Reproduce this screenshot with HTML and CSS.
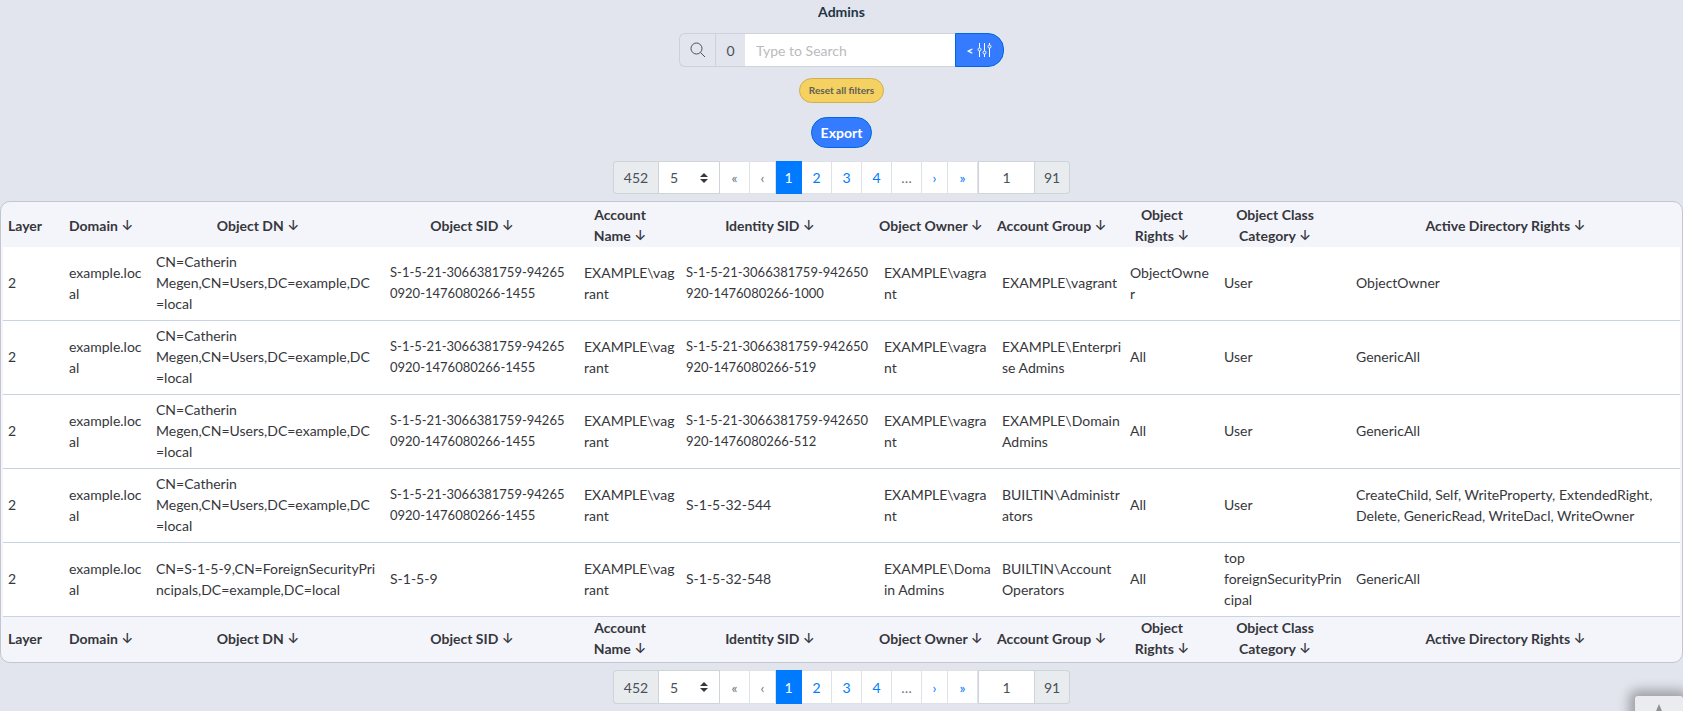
FILE: index.html
```html
<!DOCTYPE html>
<html lang="en">
<head>
<meta charset="utf-8">
<title>Admins</title>
<link rel="stylesheet" href="styles.css">
</head>
<body>
<main class="page">
<h1 class="title">Admins</h1>
<form class="search">
<label class="addon search-icon" for="q" aria-label="Search"><svg width="16" height="16" viewBox="0 0 16 16" fill="none" stroke="currentColor"><circle cx="6.5" cy="6.5" r="5.5"/><path d="M10.5 10.5 15 15"/></svg></label>
<span class="addon search-count">0</span>
<input class="search-input" id="q" type="text" placeholder="Type to Search">
<button class="search-options" type="button" aria-label="Filter options">&lt; <svg width="15" height="16" viewBox="0 0 15 16" fill="none" stroke="currentColor"><path d="M2.500 1v5M2.500 9v6M7.500 1v8M7.500 12v3M12.500 1v2M12.500 6v9"/><circle cx="2.500" cy="7.500" r="1.500"/><circle cx="7.500" cy="10.500" r="1.500"/><circle cx="12.500" cy="4.500" r="1.500"/></svg></button>
</form>
<button class="reset" type="button">Reset all filters</button>
<button class="export" type="button">Export</button>
<nav class="pager" aria-label="Pages, top">
<span class="pager-total">452</span>
<select class="pager-size" aria-label="Rows per page"><option>5</option></select>
<button class="page-item off" type="button">«</button><button class="page-item narrow off" type="button">‹</button><button class="page-item narrow current" type="button">1</button><button class="page-item" type="button">2</button><button class="page-item" type="button">3</button><button class="page-item" type="button">4</button><span class="page-item off">…</span><button class="page-item narrow" type="button">›</button><button class="page-item" type="button">»</button>
<input class="pager-input" type="text" value="1" aria-label="Page number">
<span class="pager-last">91</span>
</nav>
<div class="card">
<table class="grid">
<colgroup><col class="c-layer"><col class="c-domain"><col class="c-dn"><col class="c-sid"><col class="c-name"><col class="c-identity"><col class="c-owner"><col class="c-group"><col class="c-rights"><col class="c-class"><col class="c-adr"></colgroup>
<thead><tr><th class="start">Layer</th><th class="start">Domain <span class="arrow">↓</span></th><th>Object DN <span class="arrow">↓</span></th><th>Object SID <span class="arrow">↓</span></th><th class="wrap">Account Name <span class="arrow">↓</span></th><th>Identity SID <span class="arrow">↓</span></th><th>Object Owner <span class="arrow">↓</span></th><th>Account Group <span class="arrow">↓</span></th><th class="wrap">Object Rights <span class="arrow">↓</span></th><th class="wrap">Object Class Category <span class="arrow">↓</span></th><th>Active Directory Rights <span class="arrow">↓</span></th></tr></thead>
<tbody>
<tr><td>2</td><td>example.loc<wbr>al</td><td>CN=Catherin Megen,CN=Users,DC=example,DC<wbr>=local</td><td class="sid">S-1-5-21-3066381759-94265<br>0920-1476080266-1455</td><td>EXAMPLE\vag<wbr>rant</td><td class="sid">S-1-5-21-3066381759-942650<br>920-1476080266-1000</td><td>EXAMPLE\vagra<wbr>nt</td><td>EXAMPLE\vagrant</td><td>ObjectOwne<br>r</td><td>User</td><td>ObjectOwner</td></tr>
<tr><td>2</td><td>example.loc<wbr>al</td><td>CN=Catherin Megen,CN=Users,DC=example,DC<wbr>=local</td><td class="sid">S-1-5-21-3066381759-94265<br>0920-1476080266-1455</td><td>EXAMPLE\vag<wbr>rant</td><td class="sid">S-1-5-21-3066381759-942650<br>920-1476080266-519</td><td>EXAMPLE\vagra<wbr>nt</td><td>EXAMPLE\Enterpri<wbr>se Admins</td><td>All</td><td>User</td><td>GenericAll</td></tr>
<tr><td>2</td><td>example.loc<wbr>al</td><td>CN=Catherin Megen,CN=Users,DC=example,DC<wbr>=local</td><td class="sid">S-1-5-21-3066381759-94265<br>0920-1476080266-1455</td><td>EXAMPLE\vag<wbr>rant</td><td class="sid">S-1-5-21-3066381759-942650<br>920-1476080266-512</td><td>EXAMPLE\vagra<wbr>nt</td><td>EXAMPLE\Domain Admins</td><td>All</td><td>User</td><td>GenericAll</td></tr>
<tr><td>2</td><td>example.loc<wbr>al</td><td>CN=Catherin Megen,CN=Users,DC=example,DC<wbr>=local</td><td class="sid">S-1-5-21-3066381759-94265<br>0920-1476080266-1455</td><td>EXAMPLE\vag<wbr>rant</td><td>S-1-5-32-544</td><td>EXAMPLE\vagra<wbr>nt</td><td>BUILTIN\Administr<wbr>ators</td><td>All</td><td>User</td><td>CreateChild, Self, WriteProperty, ExtendedRight, Delete, GenericRead, WriteDacl, WriteOwner</td></tr>
<tr><td>2</td><td>example.loc<wbr>al</td><td>CN=S-1-5-9,CN=ForeignSecurityPri<wbr>ncipals,DC=example,DC=local</td><td>S-1-5-9</td><td>EXAMPLE\vag<wbr>rant</td><td>S-1-5-32-548</td><td>EXAMPLE\Doma<wbr>in Admins</td><td>BUILTIN\Account Operators</td><td>All</td><td>top foreignSecurityPrin<wbr>cipal</td><td>GenericAll</td></tr>
</tbody>
<tfoot><tr><th class="start">Layer</th><th class="start">Domain <span class="arrow">↓</span></th><th>Object DN <span class="arrow">↓</span></th><th>Object SID <span class="arrow">↓</span></th><th class="wrap">Account Name <span class="arrow">↓</span></th><th>Identity SID <span class="arrow">↓</span></th><th>Object Owner <span class="arrow">↓</span></th><th>Account Group <span class="arrow">↓</span></th><th class="wrap">Object Rights <span class="arrow">↓</span></th><th class="wrap">Object Class Category <span class="arrow">↓</span></th><th>Active Directory Rights <span class="arrow">↓</span></th></tr></tfoot>
</table>
</div>
<nav class="pager pager-bottom" aria-label="Pages, bottom">
<span class="pager-total">452</span>
<select class="pager-size" aria-label="Rows per page"><option>5</option></select>
<button class="page-item off" type="button">«</button><button class="page-item narrow off" type="button">‹</button><button class="page-item narrow current" type="button">1</button><button class="page-item" type="button">2</button><button class="page-item" type="button">3</button><button class="page-item" type="button">4</button><span class="page-item off">…</span><button class="page-item narrow" type="button">›</button><button class="page-item" type="button">»</button>
<input class="pager-input" type="text" value="1" aria-label="Page number">
<span class="pager-last">91</span>
</nav>
</main>
<button class="to-top" type="button" aria-label="Back to top"><svg width="10" height="32" viewBox="0 0 10 32" fill="#8f9093"><path d="M5 0 10 12H7V32H3V12H0Z"/></svg></button>
</body>
</html>
```
FILE: styles.css
```css
* { box-sizing: border-box; }
body { margin: 0; background: #e2e5ed; color: #36373c; font: 14px/21px Lato, "Noto Sans", sans-serif; }
button, input, select { font: inherit; color: inherit; margin: 0; }
button { cursor: pointer; }
.page { display: flex; flex-direction: column; align-items: center; }
.title { margin: 1px 0 11px; font-size: 14px; line-height: 21px; font-weight: 700; color: #1f3547; }
.search { display: flex; height: 34px; margin-bottom: 11px; color: #495057; }
.addon { display: flex; align-items: center; justify-content: center; border: 1px solid #ced1d9; border-right: 0; }
.search-icon { width: 36px; border-radius: 6px 0 0 6px; }
.search-count { width: 30px; }
.search-input { width: 210px; padding: 0 11px; border: 1px solid #ced4da; border-width: 1px 0; border-radius: 0; background: #fff; }
.search-input::placeholder { color: #babbbd; opacity: 1; }
.search-options { display: flex; align-items: center; justify-content: center; gap: 4px; width: 49px; padding: 0; border: 1px solid #0067e0; border-radius: 0 16px 16px 0; background: #347bff; color: #fff; font-size: 12px; font-weight: 700; }
.reset { height: 25px; margin-bottom: 14px; padding: 0 9px; border: 1px solid #cdb055; border-radius: 13px; background: #f4d160; color: #5f5e58; font-size: 10px; line-height: 15px; font-weight: 700; }
.export { height: 31px; margin-bottom: 13px; padding: 0 9px; border: 1px solid #0067e0; border-radius: 16px; background: #347bff; color: #fff; font-weight: 700; }
.pager { display: flex; height: 33px; margin-bottom: 7px; color: #495057; }
.pager-total, .pager-last { display: flex; align-items: center; justify-content: center; border: 1px solid #ced4da; background: #e9ecef; }
.pager-total { width: 45px; border-right: 0; border-radius: 4px 0 0 4px; }
.pager-last { width: 35px; border-left: 0; border-radius: 0 4px 4px 0; }
.pager-size { width: 62px; padding: 0 11px; border: 1px solid #ced4da; border-radius: 0; appearance: none; background: #fff url("data:image/svg+xml,%3Csvg xmlns='http://www.w3.org/2000/svg' viewBox='0 0 4 5'%3E%3Cpath fill='%23343a40' d='M2 0L0 2h4zm0 5L0 3h4z'/%3E%3C/svg%3E") no-repeat right 11px center / 8px 10px; }
.page-item { display: flex; align-items: center; justify-content: center; width: 30px; padding: 0; border: 1px solid #dee2e6; border-left: 0; background: #fff; color: #007bff; }
.page-item.narrow { width: 26px; }
.page-item.off { color: #6c757d; }
.page-item.current { border-color: #007bff; background: #007bff; color: #fff; }
.pager-input { width: 57px; padding: 0; border: 1px solid #ced4da; border-radius: 0; background: #fff; text-align: center; }
.card { width: 100%; padding: 2px 2px 3px; border: 1px solid #c3c6ce; border-radius: 10px; background: #f4f5fa; }
.grid { width: 100%; table-layout: fixed; border-spacing: 0; }
.c-layer { width: 61px; }
.c-domain { width: 87px; }
.c-dn { width: 234px; }
.c-sid { width: 194px; }
.c-name { width: 102px; }
.c-identity { width: 198px; }
.c-owner { width: 118px; }
.c-group { width: 128px; }
.c-rights { width: 94px; }
.c-class { width: 132px; }
.grid th { height: 42px; padding: 0 20px 0 0; font-weight: 700; text-align: center; white-space: nowrap; }
.grid thead th { height: 43px; padding-bottom: 1px; }
.grid th.start { padding-right: 0; padding-left: 5px; text-align: left; }
.grid th.wrap { white-space: normal; }
.arrow { font-family: Inter, sans-serif; font-weight: 500; line-height: 1; }
.grid td { height: 74px; padding: 4px 2px 6px 5px; border-bottom: 1px solid #c8d4e4; background: #fff; }
.grid td.sid { font-size: 13px; white-space: nowrap; }
.pager-bottom { height: 34px; margin: 7px 0 0; }
.to-top { position: fixed; right: 0; bottom: -33px; display: flex; justify-content: center; width: 48px; height: 48px; padding: 8px 0 0; border: 0; border-radius: 3px; background: #ebecf0; box-shadow: 0 0 12px 6px rgba(0, 0, 0, .3); }
```
